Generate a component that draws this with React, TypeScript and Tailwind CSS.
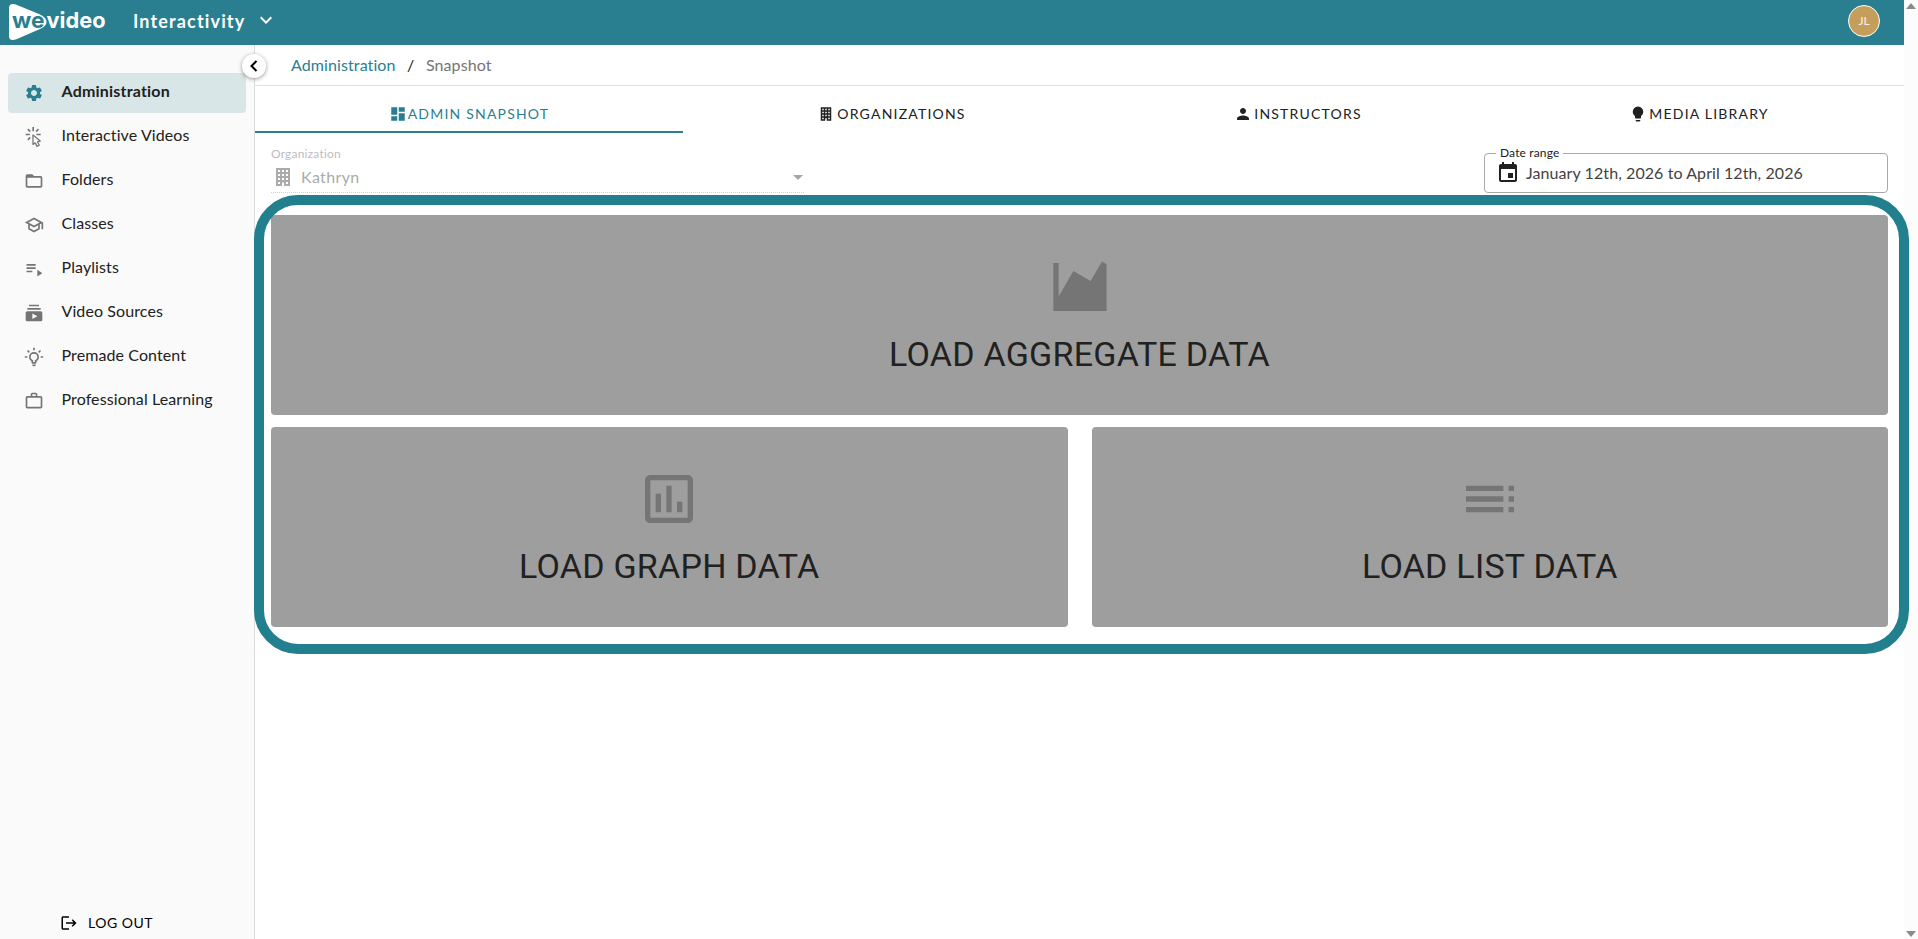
import React from 'react';
import {
  MdDashboard,
  MdEvent,
  MdFolderOpen,
  MdKeyboardArrowDown,
  MdLogout,
  MdOutlineAssessment,
  MdOutlineSchool,
  MdPerson,
  MdPlaylistPlay,
  MdSettings,
  MdSubscriptions,
  MdToc,
  MdWorkOutline,
} from 'react-icons/md';

interface IconProps {
  className?: string;
}

const makeIcon = (d: string) => ({ className }: IconProps) => (
  <svg viewBox="0 0 24 24" fill="currentColor" className={className}>
    <path d={d} />
  </svg>
);

const ClickIcon = makeIcon(
  'M11.5,11L17.88,16.37L17,16.55L16.36,16.67C15.73,16.8 15.37,17.5 15.65,18.07L15.92,18.65L17.28,21.59L15.86,22.25L14.5,19.32L14.24,18.74C13.97,18.15 13.22,17.97 12.72,18.38L12.21,18.78L11.5,19.35V11M10.76,8.69A0.76,0.76 0 0,0 10,9.45V20.9C10,21.32 10.34,21.66 10.76,21.66C10.95,21.66 11.11,21.6 11.24,21.5L13.15,19.95L14.81,23.57C14.94,23.84 15.21,24 15.5,24C15.61,24 15.72,24 15.83,23.92L18.59,22.64C18.97,22.46 19.15,22 18.95,21.63L17.28,18L19.69,17.55C19.85,17.5 20,17.43 20.12,17.29C20.39,16.97 20.35,16.5 20,16.21L11.26,8.86L11.25,8.87C11.12,8.76 10.95,8.69 10.76,8.69M15,10V8H20V10H15M13.83,4.76L16.66,1.93L18.07,3.34L15.24,6.17L13.83,4.76M10,0H12V5H10V0M3.93,14.66L6.76,11.83L8.17,13.24L5.34,16.07L3.93,14.66M3.93,3.34L5.34,1.93L8.17,4.76L6.76,6.17L3.93,3.34M7,10H2V8H7V10Z',
);
const BulbOnIcon = makeIcon(
  'M20,11H23V13H20V11M1,11H4V13H1V11M13,1V4H11V1H13M4.92,3.5L7.05,5.64L5.63,7.05L3.5,4.93L4.92,3.5M16.95,5.63L19.07,3.5L20.5,4.93L18.37,7.05L16.95,5.63M12,6A6,6 0 0,1 18,12C18,14.22 16.79,16.16 15,17.2V19A1,1 0 0,1 14,20H10A1,1 0 0,1 9,19V17.2C7.21,16.16 6,14.22 6,12A6,6 0 0,1 12,6M14,21V22A1,1 0 0,1 13,23H11A1,1 0 0,1 10,22V21H14M11,18H13V15.87C14.73,15.43 16,13.86 16,12A4,4 0 0,0 12,8A4,4 0 0,0 8,12C8,13.86 9.27,15.43 11,15.87V18Z',
);
const BulbIcon = makeIcon(
  'M12,2A7,7 0 0,0 5,9C5,11.38 6.19,13.47 8,14.74V17A1,1 0 0,0 9,18H15A1,1 0 0,0 16,17V14.74C17.81,13.47 19,11.38 19,9A7,7 0 0,0 12,2M9,21A1,1 0 0,0 10,22H14A1,1 0 0,0 15,21V20H9V21Z',
);
const BuildingIcon = makeIcon(
  'M5,3V21H11V17.5H13V21H19V3H5M7,5H9V7H7V5M11,5H13V7H11V5M15,5H17V7H15V5M7,9H9V11H7V9M11,9H13V11H11V9M15,9H17V11H15V9M7,13H9V15H7V13M11,13H13V15H11V13M15,13H17V15H15V13M7,17H9V19H7V17M15,17H17V19H15V17Z',
);
const AreaChartIcon = makeIcon('M2 3H4V15.54L9.5 6L16 9.78L20.24 2.45L21.97 3.45V21H2Z');

const Logo = () => (
  <svg width="104" height="40" viewBox="0 0 104 40" className="shrink-0 overflow-visible">
    <path d="M0 4Q0 0 4 0Q6 0 8 1L30 10Q37.5 13.5 37.5 18Q37.5 22 31 25L8 35Q0 38 0 32Z" fill="#fff" />
    <text x="3" y="23.5" fill="#297f8f" fontFamily="Inter, sans-serif" fontWeight="700" fontSize="22" textLength="32.5" lengthAdjust="spacingAndGlyphs">we</text>
    <text x="37.5" y="24" fill="#fff" fontFamily="Inter, sans-serif" fontWeight="700" fontSize="22" textLength="59" lengthAdjust="spacingAndGlyphs">video</text>
  </svg>
);

const navItems = [
  { label: 'Administration', icon: MdSettings, active: true },
  { label: 'Interactive Videos', icon: ClickIcon },
  { label: 'Folders', icon: MdFolderOpen },
  { label: 'Classes', icon: MdOutlineSchool },
  { label: 'Playlists', icon: MdPlaylistPlay },
  { label: 'Video Sources', icon: MdSubscriptions },
  { label: 'Premade Content', icon: BulbOnIcon },
  { label: 'Professional Learning', icon: MdWorkOutline },
];

const tabs = [
  { label: 'ADMIN SNAPSHOT', icon: MdDashboard, width: 'w-[428px]', active: true },
  { label: 'ORGANIZATIONS', icon: BuildingIcon, width: 'w-[419px]' },
  { label: 'INSTRUCTORS', icon: MdPerson, width: 'w-[394px]' },
  { label: 'MEDIA LIBRARY', icon: BulbIcon, width: 'w-[408px]' },
];

const Header = () => (
  <header className="flex h-[45px] shrink-0 items-start bg-[#297f8f] pl-[9px] pr-[24px] text-white">
    <div className="pt-[4px]"><Logo /></div>
    <div className="ml-5 flex h-[43px] items-center gap-[9px]">
      <span className="text-[18px] font-bold tracking-[1.15px]">Interactivity</span>
      <MdKeyboardArrowDown className="mb-1 h-6 w-6" />
    </div>
    <div className="ml-auto mt-[5px] flex h-8 w-8 items-center justify-center rounded-full border border-white bg-[#c49f5b] text-xs text-white/85">
      JL
    </div>
  </header>
);

const Sidebar = () => (
  <aside className="relative flex w-[255px] shrink-0 flex-col border-r border-[#dcdcdc] bg-[#fafafa] px-2 pt-7">
    <nav className="flex flex-col gap-1">
      {navItems.map(({ label, icon: Icon, active }) => (
        <a
          key={label}
          className={`flex h-10 w-[238px] items-center gap-[17.5px] rounded pl-4 text-[16px] ${active ? 'bg-[#d8e6e7] font-bold tracking-[0.2px]' : 'tracking-[0.1px]'}`}
        >
          <Icon className={`h-5 w-5 ${active ? 'text-[#297f8f]' : 'text-[#757575]'}`} />
          <span className="pb-1">{label}</span>
        </a>
      ))}
    </nav>
    <button className="mt-auto mb-[6px] ml-[52px] flex items-center gap-[10px] text-sm tracking-[0.5px] text-black">
      <MdLogout className="h-[18px] w-[18px]" />
      LOG OUT
    </button>
    <button className="absolute -right-3 top-[9px] z-10 flex h-6 w-6 items-center justify-center rounded-full bg-white text-black shadow-[0_1px_4px_rgba(0,0,0,0.4)]">
      <svg viewBox="0 0 8 12" fill="none" stroke="currentColor" strokeWidth="2" className="h-3 w-2">
        <path d="M6.5 1L1.5 6L6.5 11" />
      </svg>
    </button>
  </aside>
);

const Filters = () => (
  <div className="flex h-[62px] items-start justify-between pl-4 pr-4">
    <div className="h-[60px] w-[533px] border-b border-dotted border-[#d0d0d0] pt-[13px] text-[#ababab]">
      <div className="text-xs leading-4 tracking-[0.2px] text-[#bdbdbd]">Organization</div>
      <div className="flex h-[30px] items-center">
        <BuildingIcon className="h-6 w-6" />
        <span className="ml-[6px] text-[16px] tracking-[0.35px]">Kathryn</span>
        <span className="ml-auto mr-px h-0 w-0 border-x-5 border-t-5 border-x-transparent border-t-[#a5a5a5]" />
      </div>
    </div>
    <div className="relative mt-[20px] flex h-10 w-[404px] items-center rounded border border-[#a8a8a8] pl-[11px] text-[#424242]">
      <span className="absolute -top-[9px] left-[11px] bg-white px-1 text-xs leading-4 tracking-[0.15px] text-[#212121]">Date range</span>
      <MdEvent className="h-6 w-6 text-[#212121]" />
      <span className="ml-[6px] text-[16px] tracking-[0.08px]">January 12th, 2026 to April 12th, 2026</span>
    </div>
  </div>
);

interface LoadCardProps {
  label: string;
  icon: React.ComponentType<IconProps>;
  className?: string;
}

const LoadCard = ({ label, icon: Icon, className = '' }: LoadCardProps) => (
  <button className={`flex h-[200px] flex-col items-center rounded bg-[#9e9e9e] pt-10 text-[#212121] ${className}`}>
    <Icon className="h-16 w-16 text-[#757575]" />
    <span className="mt-[14px] font-[Roboto,sans-serif] text-[34px] leading-[42px] tracking-[0.25px]">{label}</span>
  </button>
);

const Main = () => (
  <main className="min-w-0 flex-1">
    <div className="flex h-[41px] items-center gap-[11.5px] border-b border-[#e0e0e0] pl-9 text-[16px] tracking-[0.1px]">
      <a className="text-[#297f8f]">Administration</a>
      <span>/</span>
      <span className="text-[#757575]">Snapshot</span>
    </div>
    <div className="flex h-[47px]">
      {tabs.map(({ label, icon: Icon, width, active }) => (
        <button
          key={label}
          className={`flex items-center justify-center border-b-2 pt-[11px] text-sm tracking-[1.2px] ${width} ${active ? 'gap-px border-[#297f8f] text-[#297f8f]' : 'gap-0.5 border-transparent pr-0.5'}`}
        >
          <Icon className="h-[18px] w-[18px]" />
          {label}
        </button>
      ))}
    </div>
    <Filters />
    {/* highlight frame runs slightly past the content on both sides */}
    <div className="relative -ml-px -mr-[5px] h-[459px] rounded-[44px] border-10 border-[#217f8e]" />
    <div className="-mt-[439px] grid grid-cols-2 gap-x-6 gap-y-3 px-4">
      <LoadCard label="LOAD AGGREGATE DATA" icon={AreaChartIcon} className="col-span-2" />
      <LoadCard label="LOAD GRAPH DATA" icon={MdOutlineAssessment} />
      <LoadCard label="LOAD LIST DATA" icon={MdToc} />
    </div>
  </main>
);

const App = () => (
  <div className="flex h-screen overflow-hidden bg-white font-[Lato,sans-serif] text-[#212121]">
    <div className="z-10 flex w-[1904px] shrink-0 flex-col">
      <Header />
      <div className="flex min-h-0 flex-1">
        <Sidebar />
        <Main />
      </div>
    </div>
    <div className="flex flex-1 flex-col items-center justify-between bg-[#fcfcfc] pt-[3px] pb-[2px]">
      <span className="h-0 w-0 border-x-5 border-b-6 border-x-transparent border-b-[#8a8a8a]" />
      <span className="h-0 w-0 border-x-5 border-t-6 border-x-transparent border-t-[#8a8a8a]" />
    </div>
  </div>
);

export default App;
